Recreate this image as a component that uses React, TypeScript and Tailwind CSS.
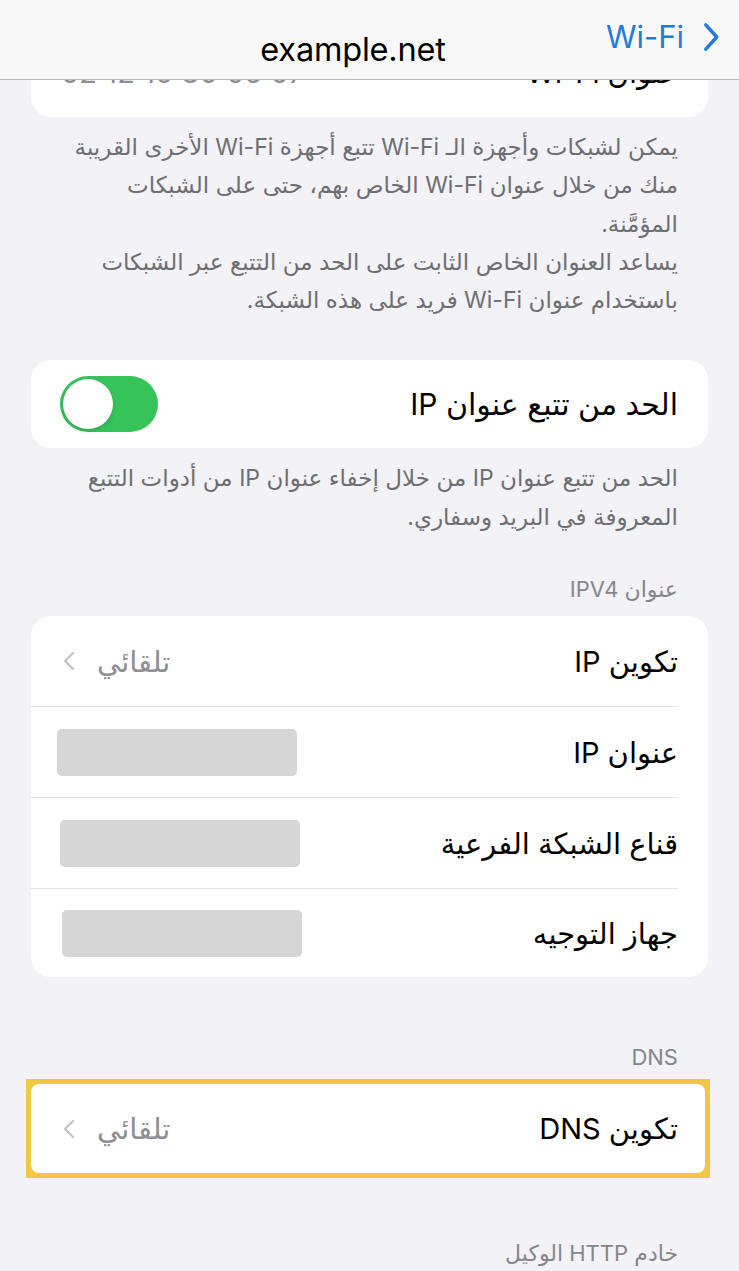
import React from "react";

const FONT = { fontFamily: '"Inter", "DejaVu Sans", "Noto Sans", sans-serif' };

function Chevron({ className }: { className?: string }) {
  return (
    <svg viewBox="0 0 12 20" className={className} fill="none">
      <path d="M10 2 L2 10 L10 18" stroke="currentColor" strokeWidth="2.4" strokeLinecap="round" strokeLinejoin="round" />
    </svg>
  );
}

function Placeholder() {
  return <div className="w-[240px] h-[47px] rounded-[5px] bg-[#d6d6d7]" />;
}

export default function App() {
  return (
    <div className="relative w-[739px] h-[1271px] overflow-hidden bg-[#f2f2f7]" style={FONT}>
      {/* header overlay */}
      <div className="absolute left-0 top-0 w-full h-[80px] bg-[#f8f8f8] border-b border-[#b9b9bc] z-10 flex items-end justify-center pb-[11px]" dir="ltr">
        <span className="text-[32.5px] leading-none text-black tracking-[-0.2px] pb-[2px] mr-[33px]">example.net</span>
        <div className="absolute right-[19px] top-[21px] flex items-center gap-[18px] text-[#1f7bdc]">
          <span className="text-[31px] leading-none">Wi-Fi</span>
          <svg viewBox="0 0 14 26" className="w-[18px] h-[30px]" fill="none">
            <path d="M2.5 2.5 L12 13 L2.5 23.5" stroke="currentColor" strokeWidth="3" strokeLinecap="round" strokeLinejoin="round" />
          </svg>
        </div>
      </div>

      <div dir="rtl" className="flex flex-col">
        {/* partially hidden card */}
        <div className="mt-[29px] mx-[31px] h-[88px] bg-white rounded-[20px] flex items-center justify-between pr-[30px] pl-[30px]">
          <span className="text-[29px] text-black">عنوان Wi-Fi</span>
          <span className="text-[29px] text-[#8e8e93]" dir="ltr">02:12:10:30:05:07</span>
        </div>

        {/* description */}
        <div className="mt-[11px] pr-[61px] pl-[40px] text-[23px] leading-[38.3px] text-[#6e6e73]">
          <div className="whitespace-nowrap">يمكن لشبكات وأجهزة الـ Wi-Fi تتبع أجهزة Wi-Fi الأخرى القريبة</div>
          <div className="whitespace-nowrap">منك من خلال عنوان Wi-Fi الخاص بهم، حتى على الشبكات</div>
          <div className="whitespace-nowrap">المؤمَّنة.</div>
          <div className="whitespace-nowrap">يساعد العنوان الخاص الثابت على الحد من التتبع عبر الشبكات</div>
          <div className="whitespace-nowrap">باستخدام عنوان Wi-Fi فريد على هذه الشبكة.</div>
        </div>

        {/* toggle card */}
        <div className="mt-[41px] mx-[31px] h-[88px] bg-white rounded-[20px] flex items-center justify-between pr-[30px] pl-[29px]">
          <span className="text-[30px] text-black">الحد من تتبع عنوان IP</span>
          <div className="w-[98px] h-[56px] rounded-full bg-[#36c35a] flex items-center px-[3px]" dir="ltr">
            <div className="w-[50px] h-[50px] rounded-full bg-white shadow-[0_2px_4px_rgba(0,0,0,0.15)]" />
          </div>
        </div>

        <div className="mt-[11px] pr-[61px] pl-[40px] text-[23px] leading-[38.5px] text-[#6e6e73]">
          <div className="whitespace-nowrap">الحد من تتبع عنوان IP من خلال إخفاء عنوان IP من أدوات التتبع</div>
          <div className="whitespace-nowrap">المعروفة في البريد وسفاري.</div>
        </div>

        {/* IPv4 section */}
        <div className="mt-[38px] pr-[61px] text-[22px] leading-[30px] text-[#86868b]">عنوان IPV4</div>
        <div className="mt-[12px] mx-[31px] bg-white rounded-[20px] flex flex-col">
          <div className="h-[90px] flex items-center justify-between pr-[30px] pl-[32px]">
            <span className="text-[29px] text-black">تكوين IP</span>
            <div className="flex items-center gap-[22px] text-[#8e8e93]">
              <span className="text-[29px]">تلقائي</span>
              <Chevron className="w-[12px] h-[20px] text-[#c4c4c7]" />
            </div>
          </div>
          <div className="mr-[30px] h-px bg-[#e3e3e6]" />
          <div className="h-[90px] flex items-center justify-between pr-[30px] pl-[26px]">
            <span className="text-[29px] text-black">عنوان IP</span>
            <Placeholder />
          </div>
          <div className="mr-[30px] h-px bg-[#e3e3e6]" />
          <div className="h-[90px] flex items-center justify-between pr-[30px] pl-[29px]">
            <span className="text-[29px] text-black">قناع الشبكة الفرعية</span>
            <Placeholder />
          </div>
          <div className="mr-[30px] h-px bg-[#e3e3e6]" />
          <div className="h-[88px] flex items-center justify-between pr-[30px] pl-[31px]">
            <span className="text-[29px] text-black">جهاز التوجيه</span>
            <Placeholder />
          </div>
        </div>

        {/* DNS section */}
        <div className="mt-[65px] pr-[61px] text-[22px] leading-[30px] text-[#86868b]">DNS</div>
        <div className="mt-[7px] mr-[29px] ml-[26px] border-[5px] border-[#f3c746] bg-[#f3c746]">
          <div className="h-[89px] bg-white rounded-[8px] flex items-center justify-between pr-[27px] pl-[32px]">
            <span className="text-[29px] text-black">تكوين DNS</span>
            <div className="flex items-center gap-[22px] text-[#8e8e93]">
              <span className="text-[29px]">تلقائي</span>
              <Chevron className="w-[12px] h-[20px] text-[#c4c4c7]" />
            </div>
          </div>
        </div>

        <div className="mt-[60px] pr-[61px] text-[22px] leading-[30px] text-[#86868b]">خادم HTTP الوكيل</div>
      </div>
    </div>
  );
}
